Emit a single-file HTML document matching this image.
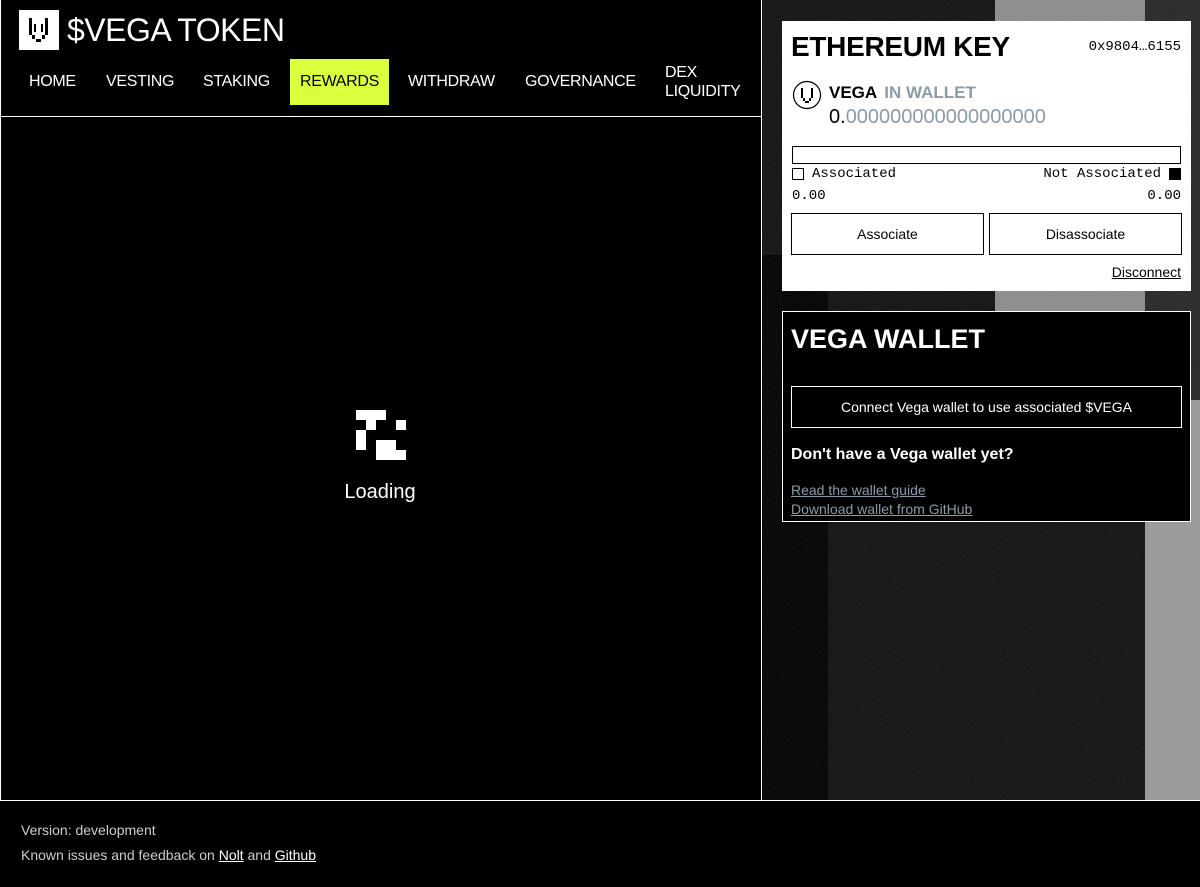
<!DOCTYPE html>
<html><head><meta charset="utf-8"><style>
*{margin:0;padding:0;box-sizing:border-box}
body{width:1200px;height:887px;background:#000;font-family:"Liberation Sans",sans-serif;color:#fff;position:relative;overflow:hidden}
.a{position:absolute}
.mono{font-family:"Liberation Mono",monospace}
.nav{position:absolute;top:59px;height:46px;display:flex;align-items:center;font-size:16px;color:#fff;letter-spacing:-0.3px}
.btn{position:absolute;border:1px solid #000;display:flex;align-items:center;justify-content:center;font-size:14px}
</style></head><body>
<svg class="a" style="left:762px;top:0" width="438" height="800">
<defs><filter id="n"><feTurbulence type="fractalNoise" baseFrequency="0.9" numOctaves="2" seed="3"/><feColorMatrix type="saturate" values="0"/><feComponentTransfer><feFuncA type="table" tableValues="0 0.12"/></feComponentTransfer></filter></defs>
<rect x="0" y="0" width="438" height="800" fill="#000"/>
<rect x="0" y="0" width="233" height="255" fill="#111"/>
<rect x="66" y="255" width="167" height="545" fill="#101010"/>
<rect x="233" y="0" width="150" height="520" fill="#8c8c8c"/>
<rect x="233" y="520" width="150" height="280" fill="#101010"/>
<rect x="383" y="0" width="55" height="400" fill="#262626"/>
<rect x="383" y="400" width="55" height="400" fill="#9a9a9a"/>
<rect x="0" y="0" width="438" height="800" filter="url(#n)"/>
</svg>
<div class="a" style="left:0;top:0;width:1px;height:800px;background:#fff"></div>
<div class="a" style="left:761px;top:0;width:1px;height:800px;background:#fff"></div>
<div class="a" style="left:0;top:116px;width:762px;height:1px;background:#fff"></div>
<div class="a" style="left:0;top:800px;width:1200px;height:1px;background:#fff"></div>
<div class="a" style="left:19px;top:10px;width:40px;height:40px;background:#fff"></div>
<svg class="a" style="left:19px;top:10px" width="40" height="40"><g fill="#000"><rect x="10" y="8" width="3" height="17"/><rect x="26" y="8" width="3" height="17"/><rect x="13" y="25" width="3" height="4"/><rect x="23" y="25" width="3" height="4"/><rect x="17" y="29" width="5" height="3"/><rect x="15" y="14" width="2" height="8"/><rect x="22" y="14" width="2" height="8"/></g></svg>
<div class="a" style="left:67px;top:11px;font-size:32px;line-height:38px;letter-spacing:-0.5px">$VEGA TOKEN</div>
<div class="nav" style="left:29px">HOME</div>
<div class="nav" style="left:106px">VESTING</div>
<div class="nav" style="left:203px">STAKING</div>
<div class="nav" style="left:290px;width:99px;background:#daff3d;color:#000;justify-content:center">REWARDS</div>
<div class="nav" style="left:408px">WITHDRAW</div>
<div class="nav" style="left:525px">GOVERNANCE</div>
<div class="nav" style="left:665px;line-height:19px">DEX<br>LIQUIDITY</div>
<svg class="a" style="left:356px;top:410px" width="50" height="50"><g fill="#fff"><rect x="0" y="0" width="30" height="10"/><rect x="10" y="10" width="10" height="10"/><rect x="40" y="10" width="10" height="10"/><rect x="0" y="20" width="10" height="20"/><rect x="20" y="30" width="20" height="10"/><rect x="20" y="40" width="30" height="10"/></g></svg>
<div class="a" style="left:320px;top:481px;width:120px;text-align:center;font-size:20px">Loading</div>
<div class="a" style="left:782px;top:21px;width:409px;height:270px;background:#fff;color:#000">
<div class="a" style="left:9px;top:10px;font-size:28px;font-weight:bold;letter-spacing:-0.3px">ETHEREUM KEY</div>
<div class="a mono" style="right:10px;top:18px;font-size:14px">0x9804…6155</div>
<svg class="a" style="left:10px;top:59px" width="30" height="30"><circle cx="15" cy="15" r="13.5" fill="none" stroke="#000" stroke-width="1.2"/><g fill="#000"><rect x="9" y="8" width="2" height="10"/><rect x="19" y="8" width="2" height="10"/><rect x="11" y="18" width="2" height="3"/><rect x="17" y="18" width="2" height="3"/><rect x="13" y="21" width="4" height="2"/></g></svg>
<div class="a" style="left:47px;top:62px;font-size:17px;font-weight:bold">VEGA <span style="color:#8a9ba8;margin-left:3px">IN WALLET</span></div>
<div class="a" style="left:47px;top:85px;font-size:20px">0.<span style="color:#8a9ba8">000000000000000000</span></div>
<div class="a" style="left:10px;top:125px;width:389px;height:18px;border:1px solid #000"></div>
<div class="a" style="left:10px;top:147px;width:12px;height:12px;border:1px solid #000"></div>
<div class="a mono" style="left:30px;top:145px;font-size:14px">Associated</div>
<div class="a mono" style="right:30px;top:145px;font-size:14px">Not Associated</div>
<div class="a" style="right:10px;top:147px;width:12px;height:12px;background:#000"></div>
<div class="a mono" style="left:10px;top:167px;font-size:14px">0.00</div>
<div class="a mono" style="right:10px;top:167px;font-size:14px">0.00</div>
<div class="btn" style="left:9px;top:192px;width:193px;height:42px">Associate</div>
<div class="btn" style="left:207px;top:192px;width:193px;height:42px">Disassociate</div>
<div class="a" style="right:10px;top:243px;font-size:14px;text-decoration:underline">Disconnect</div>
</div>
<div class="a" style="left:782px;top:311px;width:409px;height:211px;background:#000;border:1px solid #fff">
<div class="a" style="left:8px;top:12px;font-size:27px;font-weight:bold">VEGA WALLET</div>
<div class="btn" style="left:8px;top:74px;width:391px;height:42px;border-color:#fff">Connect Vega wallet to use associated $VEGA</div>
<div class="a" style="left:8px;top:134px;font-size:16px;font-weight:bold">Don't have a Vega wallet yet?</div>
<div class="a" style="left:8px;top:169px;font-size:14px;color:#8a9ba8;text-decoration:underline;line-height:19px">Read the wallet guide<br>Download wallet from GitHub</div>
</div>
<div class="a" style="left:21px;top:822px;font-size:14px;color:#ccc">Version: development</div>
<div class="a" style="left:21px;top:847px;font-size:14px;color:#ccc">Known issues and feedback on <span style="color:#fff;text-decoration:underline">Nolt</span> and <span style="color:#fff;text-decoration:underline">Github</span></div>
</body></html>
